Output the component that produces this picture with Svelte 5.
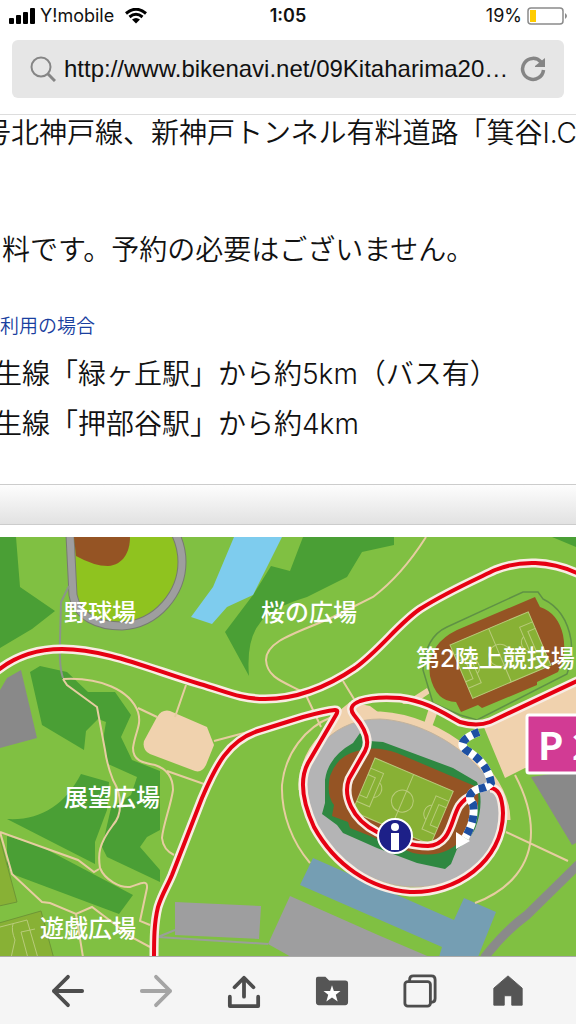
<script>
  const lines = [
    { text: '号北神戸線、新神戸トンネル有料道路「箕谷I.C」', kind: 'first' },
    { text: '料です。予約の必要はございません。', kind: 'note' },
    { text: '生線「緑ヶ丘駅」から約5km（バス有）', kind: 'station' },
    { text: '生線「押部谷駅」から約4km', kind: 'station' }
  ];
  let address = $state('http://www.bikenavi.net/09Kitaharima20…');
</script>

{#snippet pitch()}
  <rect width="85" height="58" fill="#88b135" />
  <path d="M42 0V58M0 11H14V47H0M0 18H8V40H0M85 11H71V47H85M85 18H77V40H85M14 21A9 9 0 0 1 14 37M71 21A9 9 0 0 0 71 37" />
  <circle cx="42" cy="29" r="11" fill="none" />
{/snippet}

<div class="screen">
  <header>
    <div class="status">
      <div class="carrier">
        <svg width="26" height="16" viewBox="0 0 26 16" aria-hidden="true">
          <rect y="10" width="5" height="6" rx="1" /><rect x="7" y="7" width="5" height="9" rx="1" /><rect x="14" y="4" width="5" height="12" rx="1" /><rect x="21" width="5" height="16" rx="1" />
        </svg>
        <span>Y!mobile</span>
        <svg class="wifi" width="22" height="16" viewBox="0 0 22 16" aria-hidden="true">
          <path d="M1 5.5Q11 -3 21 5.5M4.5 9Q11 3.600 17.500 9" fill="none" stroke="#000" stroke-width="3" />
          <path d="M7 11.500Q11 8.500 15 11.500L11 15.500Z" />
        </svg>
      </div>
      <strong>1:05</strong>
      <div class="power">
        <span>19%</span>
        <svg width="41" height="18" viewBox="0 0 41 18" aria-hidden="true">
          <rect x="1" y="1" width="35" height="16" rx="3" fill="#fff" stroke="#8b8b8b" stroke-width="1.500" />
          <rect x="3" y="3" width="6" height="12" fill="#fc0" /><path d="M38 6Q42 9 38 12Z" fill="#8b8b8b" />
        </svg>
      </div>
    </div>
    <div class="address">
      <svg width="26" height="26" viewBox="0 0 26 26" fill="none" stroke="#858585" aria-hidden="true">
        <circle cx="11" cy="11" r="9.500" stroke-width="2" /><path d="M18 18L25 25" stroke-width="3" />
      </svg>
      <input type="text" aria-label="URL" bind:value={address} />
      <button aria-label="再読み込み">
        <svg width="26" height="26" viewBox="0 0 26 26" aria-hidden="true">
          <path d="M21 6A10.500 10.500 0 1 0 23.500 14" fill="none" stroke="#858585" stroke-width="3.500" /><path d="M25 2V11H15V10Z" fill="#858585" />
        </svg>
      </button>
    </div>
  </header>

  <main>
    <section class="access">
      {#each lines as line, i}
        {#if i === 2}<a href="#access">利用の場合</a>{/if}
        <p class={line.kind}>{line.text}</p>
      {/each}
    </section>
    <div class="band"></div>

    <svg class="map" viewBox="0 537 576 419" role="img" aria-label="公園マップ">
      <rect y="537" width="576" height="420" fill="#80c042" />
      <g fill="#4a9f35">
        <path d="M0 537H16L20 587L55 611L32 629L0 648Z" />
        <path d="M30 672L40 666L67 672L88 692H115L131 715L121 737L132 760L160 771V830L147 837L140 847L160 870V882L107 857L102 847L111 808L131 795L137 777L108 764L103 740L106 722L98 719L86 731L84 750L42 725Z" />
        <path d="M7 819C40 821 65 805 81 774L109 782L107 810L95 842V864Z" />
        <path d="M7 836L40 846L133 895L119 914L12 874L7 865Z" />
        <path d="M303 537L290 571L271 566L253 595L225 632L249 676Q246 640 260 623Q268 609 307 597L347 577L362 552L394 545V537Z" />
        <path d="M552 537L576 547V537Z" />
      </g>
      <path d="M234 537H282L253 595L227 607L212 624L191 617L213 587Z" fill="#7eccee" />
      <path d="M0 690L7 678L21 670L37 738L0 748Z" fill="#898989" />
      <g fill="#88b135" stroke="#6e9636">
        <path d="M-1 835L17 902L-1 906Z" /><path d="M-1 923L41 911L54 959H-1Z" />
        <path d="M0 927L27 920L38 958M11 958L15 940Q11 930 13 924M35 929L21 932L28 958" fill="none" stroke="#b8cb7a" />
      </g>
      <path d="M157 717Q162 709 170 711L207 727L214 745L206 765Q202 773 195 771L150 754Q142 750 144 741Z" fill="#f0d2ae" />

      <path d="M70 535L73 595C77 617 98 626 122 626C158 624 182 592 182 562Q182 548 176 535" fill="#8fc31f" stroke="#777b70" stroke-width="9" />
      <path d="M70 535L73 595C77 617 98 626 122 626C158 624 182 592 182 562Q182 548 176 535" fill="none" stroke="#9e9e9f" stroke-width="7" />
      <path d="M74 537L76 556Q94 566 108 566C123 565 130 552 130 537Z" fill="#955424" />
      <path d="M69 586L61 602L60 640Q59 667 63 678" fill="none" stroke="#8c948a" stroke-width="2" />

      <path d="M175 902L261 906L259 939L175 935ZM290 896L378 935L432 958H293L268 944Z" fill="#9e9e9f" />
      <path d="M175 930L158 937L268 944" fill="none" stroke="#9a9f98" stroke-width="2" />
      <path d="M313 858L454 920L464 898L496 912L478 957H439L442 947L300 885Z" fill="#759eb3" />
      <path d="M531 777L576 770V843L572 845Z" fill="#898989" />
      <path d="M579 864L527 915Q506 930 484 958" fill="none" stroke="#8a8a8a" stroke-width="9" />

      <g fill="none" stroke="#e6cda1" stroke-width="2">
        <path d="M63 679L67 685L97 707L105 750Q107 765 113 780C123 797 122 815 113 825C98 845 98 855 100 868C105 880 120 888 130 887C138 885 148 878 147 888L140 921L150 925" />
        <path d="M63 679C100 677 130 690 138 712C142 725 135 732 133 748C133 762 145 763 155 765C170 770 173 780 173 790C171 805 163 825 162 838C163 848 170 853 174 855M138 708L157 717M186 685L175 717M214 741L248 732M167 771L204 784" />
        <path d="M0 832L78 860L94 872L99 869M0 832L12 874L42 902L50 903L76 914L92 907L133 938L150 947M76 914L83 957" />
        <path d="M426 537Q402 575 373 597L333 617C300 632 266 640 266 660C267 678 284 682 305 693L321 727M343 681L354 699" />
        <path d="M332 717C305 727 285 754 282 785C281 815 293 843 310 863M515 775C523 790 531 812 531 832C531 865 510 890 475 903M506 832L568 861" />
      </g>

      <path d="M483 725L578 682V765L525 768L505 778Z" fill="#f0d2ae" />
      <path d="M334 715L350 702L370 706L390 721L340 740ZM402 704L427 688L430 693L414 704ZM424 724L429 708L438 711L432 727Z" fill="#f0d2ae" />
      <path d="M306 790C306 750 335 719 380 719C440 722 503 775 503 820" fill="none" stroke="#f0d2ae" stroke-width="15" />
      <path d="M306 790C306 750 335 719 380 719C440 722 503 775 503 820C503 860 460 887 415 887C360 887 306 840 306 790Z" fill="#b4b4b5" stroke="#c3b39c" />
      <path d="M360 733L369 741L383 742L453 768L477 782Q485 803 475 829Q469 841 457 849L451 864L445 869L417 863L377 848L343 833L337 825L322 814L325 803V780Q328 757 353 743Z" fill="#2e8841" />
      <path d="M357 751Q375 745 397 753L477 787Q483 812 465 836Q446 860 413 853L350 828L348 822L332 816L334 805Q326 795 330 776Q337 756 357 751Z" fill="#955424" />
      <g transform="translate(375 758) rotate(23)" stroke="#b8cb7a" fill="none">{@render pitch()}</g>

      <path d="M523 592H538L543 599Q566 610 571 640Q573 657 567 674L477 720L460 715L433 703L423 670Q425 637 447 627Z" fill="#80c042" stroke="#5f9145" stroke-width="1.500" />
      <path d="M535 597L540 607Q558 613 563 635Q567 655 558 672L537 682V685L482 708L478 705L461 712L456 702Q436 702 430 676Q426 645 457 630Z" fill="#955424" />
      <g transform="translate(450 645) rotate(-23)" stroke="#b8cb7a" fill="none">{@render pitch()}</g>

      {#each ['white', 'red'] as layer}
        <g class="road {layer}">
          <path d="M-3 671C18 654 40 649 62 649C105 649 150 669 200 684C225 691 240 699 265 699C300 699 330 685 355 668C380 650 398 624 420 609C445 593 470 582 495 570C520 560 550 560 579 574" />
          <path d="M154 960C154 940 154 923 158 907C162 894 167 887 172 875L202 798C216 765 228 741 258 731L303 717Q325 711 335 710Q339 710 336 715L308 763C299 780 303 803 314 827C335 865 370 889 410 892C455 894 503 862 503 813Q502 788 490 788" />
          <path d="M579 680L490 722Q477 727 460 722C440 711 425 701 400 698Q375 696 360 701Q347 706 354 715C365 728 371 740 365 751L349 779C343 795 351 819 377 832C395 841 412 846 428 846C451 845 451 819 459 806Q465 798 470 797" />
        </g>
      {/each}

      <path d="M479 732Q455 741 466 750Q488 763 491 783Q489 787 478 789Q465 794 473 804Q476 820 465 838" fill="none" stroke="#fff" stroke-width="8" />
      <path d="M479 732Q455 741 466 750Q488 763 491 783Q489 787 478 789Q465 794 473 804Q476 820 465 838" fill="none" stroke="#1d50a2" stroke-width="8" stroke-dasharray="7 6" />
      <path d="M456 832L470 841L456 849Z" fill="#fff" />
      <circle cx="395" cy="836" r="17" fill="#1d2088" stroke="#fff" stroke-width="2" />
      <circle cx="395" cy="827" r="4" fill="#fff" /><rect x="391" y="833" width="8" height="17" fill="#fff" />
      <rect x="527" y="715" width="70" height="58" rx="2" fill="#d23b94" stroke="#fff" stroke-width="3" />
      <text x="538" y="760" class="parking">P 2</text>
      <g class="labels">
        <text x="64" y="621">野球場</text>
        <text x="261" y="621">桜の広場</text>
        <text x="416" y="667">第2陸上競技場</text>
        <text x="64" y="806">展望広場</text>
        <text x="40" y="937">遊戯広場</text>
      </g>
    </svg>
  </main>

  <nav>
    <button aria-label="戻る"><svg viewBox="0 0 36 36"><path d="M33 18H3M18 3L3 18L18 33" class="line" /></svg></button>
    <button aria-label="進む" disabled><svg viewBox="0 0 36 36"><path d="M3 18H33M18 3L33 18L18 33" class="line" /></svg></button>
    <button aria-label="共有"><svg viewBox="0 0 36 36"><path d="M18 24V4M8 14L18 4L28 14M3 24V34H33V24" class="line" /></svg></button>
    <button aria-label="ブックマーク"><svg viewBox="0 0 36 36"><path d="M3 3H11L15 7H32Q35 7 35 10V30Q35 33 32 33H4Q1 33 1 30V5Q1 3 3 3Z" fill="#555" /><path d="M18 12L20 18H27L22 22L24 29L18 25L12 29L14 22L9 18H16Z" fill="#fff" /></svg></button>
    <button aria-label="タブ"><svg viewBox="0 0 36 36"><path d="M7 8V6Q7 2 11 2H30Q34 2 34 6V26Q34 30 30 30H29" class="thin" /><rect x="2" y="8" width="27" height="26" rx="3" class="thin" /></svg></button>
    <button aria-label="ホーム"><svg viewBox="0 0 36 36"><path d="M18 2L33 15V33H22V23H14V33H3V15Z" fill="#555" stroke="#555" stroke-linejoin="round" /></svg></button>
  </nav>
</div>

<style>
  :global(body) { margin: 0; background: #fff; }
  .screen { min-height: 100vh; display: flex; flex-direction: column; overflow: hidden; color: #111; font-family: Inter, "Noto Sans CJK JP", sans-serif; }
  header { padding: 0 12px 16px; border-bottom: 1px solid #ddd; background: #fff; }
  .status { height: 32px; margin-bottom: 8px; display: grid; grid-template-columns: 1fr auto 1fr; align-items: center; font-size: 18px; line-height: 24px; }
  .status strong { font-weight: 600; }
  .carrier, .power { display: flex; align-items: center; gap: 5px; }
  .carrier { margin-left: -3px; }
  .wifi { margin-left: 6px; }
  .power { justify-content: flex-end; margin-right: -4px; }
  .address { display: flex; align-items: center; gap: 8px; height: 58px; box-sizing: border-box; padding: 0 18px; border-radius: 6px; background: #e6e6e6; }
  .address svg { flex: none; display: block; }
  input { flex: 1; min-width: 0; padding: 0; border: 0; outline: 0; background: none; color: #111; font: 24px/32px "Liberation Sans", Arial, sans-serif; text-overflow: ellipsis; }
  button { padding: 0; border: 0; background: none; }
  main { flex: 1; }
  .access { overflow: hidden; white-space: nowrap; font-family: Inter, "Noto Sans CJK JP", sans-serif; font-weight: 350; padding-bottom: 35px; }
  p { margin: 0; font-size: 28px; line-height: 50px; }
  .first { line-height: 36px; text-indent: -17px; }
  .note { padding: 74px 0 36px; text-indent: 2px; }
  .station { text-indent: -6px; }
  a { display: block; color: #1a3f9f; font-size: 19px; line-height: 32px; margin-bottom: 6px; text-decoration: none; }
  .band { height: 39px; margin-bottom: 12px; border: solid #ccc; border-width: 1px 0; background: linear-gradient(#fdfdfd, #e2e2e2); }
  .map { display: block; width: 100%; height: auto; }
  .road { fill: none; stroke-linejoin: round; }
  .white { stroke: #f8ece4; stroke-width: 9; }
  .red { stroke: #e60012; stroke-width: 4; }
  .labels { fill: #fff; font: 500 24px Inter, "Noto Sans CJK JP", sans-serif; }
  .parking { fill: #fff; font: 700 38px "Noto Sans CJK JP", sans-serif; }
  nav { display: flex; justify-content: space-around; align-items: center; height: 67px; padding: 0 24px; border-top: 1px solid #aaa; background: #f5f5f5; }
  nav button { flex: 1; }
  nav svg { display: block; width: 34px; height: 34px; margin: 0 auto; }
  .line, .thin { fill: none; stroke: #4d4d4d; stroke-width: 4; stroke-linecap: round; stroke-linejoin: round; }
  .thin { stroke-width: 3; }
  button:disabled .line { stroke: #a5a5a5; }
</style>
